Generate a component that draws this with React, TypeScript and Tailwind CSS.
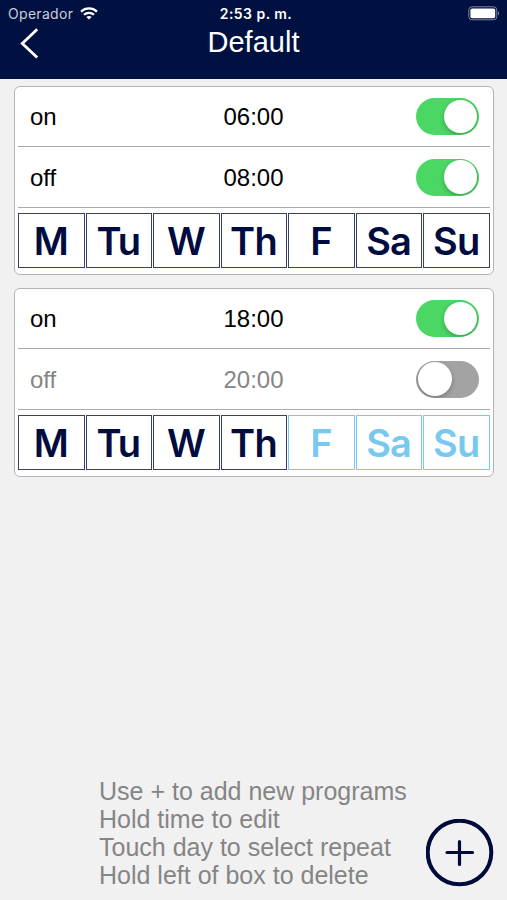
import React from 'react';

const DAYS = ['M', 'Tu', 'W', 'Th', 'F', 'Sa', 'Su'];

interface Slot {
  label: string;
  time: string;
  enabled: boolean;
}

interface Program {
  id: number;
  slots: Slot[];
  activeDays: string[];
}

const programs: Program[] = [
  {
    id: 1,
    slots: [
      { label: 'on', time: '06:00', enabled: true },
      { label: 'off', time: '08:00', enabled: true },
    ],
    activeDays: DAYS,
  },
  {
    id: 2,
    slots: [
      { label: 'on', time: '18:00', enabled: true },
      { label: 'off', time: '20:00', enabled: false },
    ],
    activeDays: ['M', 'Tu', 'W', 'Th'],
  },
];

const Toggle: React.FC<{ enabled: boolean }> = ({ enabled }) => (
  <button
    role="switch"
    aria-checked={enabled}
    className={`flex h-[37px] w-[63px] items-center overflow-hidden rounded-full px-[2px] ${
      enabled ? 'justify-end bg-[#4bd763]' : 'justify-start bg-[#a3a3a3]'
    }`}
  >
    <span className="size-[33.5px] rounded-full bg-white shadow-[0_2px_5px_rgba(0,0,0,0.25)]" />
  </button>
);

const SlotRow: React.FC<{ slot: Slot }> = ({ slot }) => (
  <div
    className={`mx-[3px] grid grid-cols-3 items-center border-b-[1.5px] border-[#ababab] pr-[11px] pl-3 text-2xl ${
      slot.enabled ? 'text-black' : 'text-[#858585]'
    }`}
  >
    <span className="pt-px">{slot.label}</span>
    <span className="pt-px pr-[2px] text-center">{slot.time}</span>
    <div className="flex justify-end">
      <Toggle enabled={slot.enabled} />
    </div>
  </div>
);

const ProgramCard: React.FC<{ program: Program }> = ({ program }) => (
  <section className="grid h-[189px] grid-rows-[60px_61px_1fr] rounded-md border border-[#b4b4b4] bg-white">
    {program.slots.map((slot) => (
      <SlotRow key={slot.label} slot={slot} />
    ))}
    <div className="mx-[3px] mt-[5px] mb-[6px] grid grid-cols-7 gap-[1px] font-[Inter,sans-serif] text-[38px] leading-none font-semibold tracking-[-0.8px]">
      {DAYS.map((day) => (
        <button
          key={day}
          className={`flex items-center justify-center border pr-px ${
            program.activeDays.includes(day)
              ? 'border-[#35406b] text-[#000c40]'
              : 'border-[#78c8f0] text-[#78c8f0]'
          }`}
        >
          {day}
        </button>
      ))}
    </div>
  </section>
);

const StatusBar: React.FC = () => (
  <div className="grid h-[27px] grid-cols-3 items-center pr-[7px] pl-2 font-[Inter,sans-serif] text-sm text-white">
    <div className="flex items-center gap-[7px] text-[#c9cede]">
      <span className="tracking-[0.3px]">Operador</span>
      <svg width="18" height="13" viewBox="0 0 18 13" fill="none" stroke="#fff" strokeWidth="2.2">
        <path d="M1 4.6C5.6.4 12.4.4 17 4.6" />
        <path d="M4 7.8c2.8-2.6 7.2-2.6 10 0" />
        <path d="M9 12.6 6.3 10c1.5-1.4 3.9-1.4 5.4 0z" fill="#fff" stroke="none" />
      </svg>
    </div>
    <span className="pl-1 text-center font-semibold tracking-[0.45px]">2:53 p. m.</span>
    <div className="flex items-center justify-end">
      <svg width="32" height="15" viewBox="0 0 32 15" fill="none">
        <rect x=".8" y=".8" width="28" height="13" rx="3.2" stroke="#7b84a5" />
        <rect x="2.4" y="2.4" width="24.8" height="9.8" rx="1.8" fill="#fff" />
        <path d="M30 5.2c1.5.6 1.5 3.6 0 4.2z" fill="#7b84a5" />
      </svg>
    </div>
  </div>
);

export default function App() {
  return (
    <div className="flex h-[900px] w-full flex-col overflow-hidden bg-[#f1f1f1] font-['Liberation_Sans',Arial,sans-serif]">
      <header className="h-[79px] bg-[#001040]">
        <StatusBar />
        <div className="grid h-8 grid-cols-[60px_1fr_60px] items-center text-white">
          <button aria-label="Back" className="pl-5">
            <svg width="20" height="32" viewBox="0 0 20 32" fill="none" stroke="currentColor" strokeWidth="2.8">
              <path d="M17.2 2.3 2.3 16.5l14.9 14" />
            </svg>
          </button>
          <h1 className="pb-[2px] text-center text-[29px] leading-none">Default</h1>
        </div>
      </header>

      <main className="flex flex-col gap-[13px] pt-[7px] pr-[13px] pl-[14px]">
        {programs.map((program) => (
          <ProgramCard key={program.id} program={program} />
        ))}
      </main>

      <footer className="mt-auto flex items-end justify-between pr-[13px] pb-[11px] pl-[99px]">
        <p className="text-[25px] leading-[28px] whitespace-nowrap text-[#858585]">
          Use + to add new programs
          <br />
          Hold time to edit
          <br />
          Touch day to select repeat
          <br />
          Hold left of box to delete
        </p>
        <button aria-label="Add program" className="mb-[2px] shrink-0">
          <svg width="68" height="68" viewBox="0 0 68 68" fill="none" stroke="#000b3c">
            <circle cx="33.5" cy="33.5" r="31.8" strokeWidth="4" />
            <path d="M33.5 22.5v23M21 33.5h25.5" strokeWidth="3.2" strokeLinecap="round" />
          </svg>
        </button>
      </footer>
    </div>
  );
}
